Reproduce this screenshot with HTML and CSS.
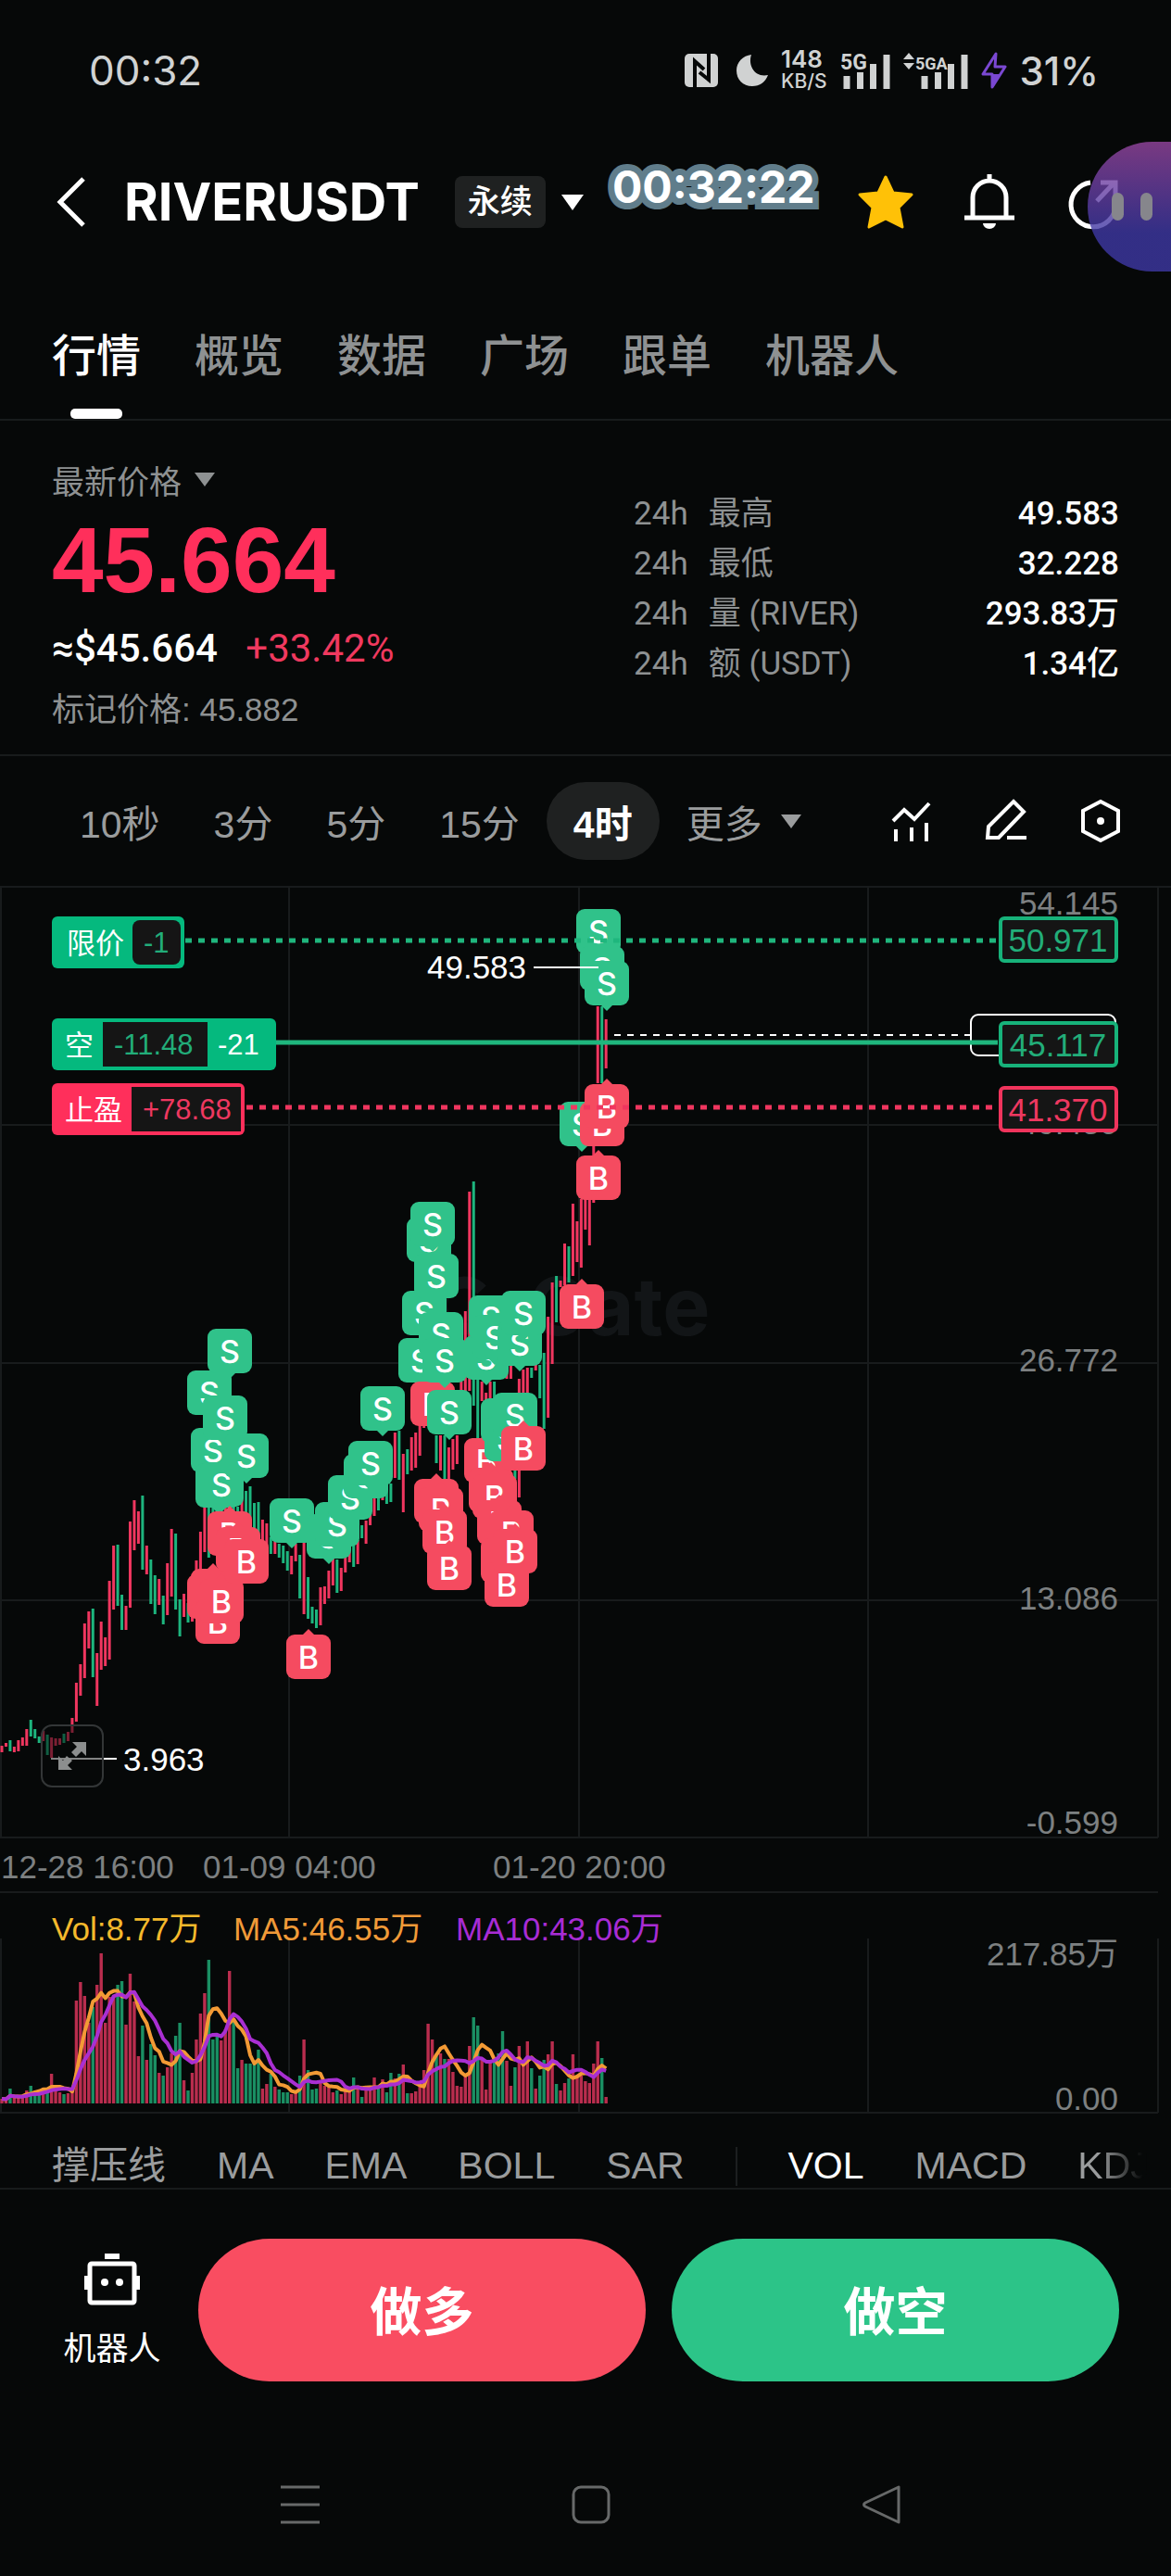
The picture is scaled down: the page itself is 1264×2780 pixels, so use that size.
FILE: index.html
```html
<!DOCTYPE html>
<html lang="zh-CN">
<head>
    <meta charset="UTF-8">
    <meta name="viewport" content="width=device-width, initial-scale=1.0">
    <title>RIVERUSDT 永续</title>
    <link rel="stylesheet" href="styles.css">
</head>
<body>
    <div class="status-bar">
        <span class="status-time">00:32</span>
        <div class="status-icons">
            <svg class="icon-nfc" viewBox="0 0 36 36" width="36" height="36">
                <rect width="36" height="36" rx="5" fill="#d0d2d2"/>
                <path d="M11 36V8L21 17M26 0V28L16 20" fill="none" stroke="#060808" stroke-width="4"/>
            </svg>
            <svg class="icon-moon" viewBox="0 0 34 34" width="34" height="34">
                <path d="M16 0C12 12 20 25 34 22C31 30 25 34 17 34C7 34 0 27 0 17C0 8 7 1 16 0Z" fill="#d0d2d2"/>
            </svg>
            <div class="net-speed"><b>148</b><span>KB/S</span></div>
            <svg class="icon-signal" viewBox="0 0 54 42" width="54" height="42">
                <text x="0" y="20" class="signal-text">5G</text>
                <path d="M7 41V27M21.500 41V23M35.500 41V14M50 41V4" class="signal-bars"/>
            </svg>
            <svg class="icon-signal-5ga" viewBox="0 0 70 42" width="70" height="42">
                <path d="M6 2L12 9H0ZM6 20L0 13H12Z" fill="#d0d2d2"/>
                <text x="13" y="20" class="signal-text small">5GA</text>
                <path d="M23 41V27M37.500 41V23M51.500 41V14M66 41V4" class="signal-bars"/>
            </svg>
            <svg class="icon-bolt" viewBox="0 0 28 40" width="28" height="40">
                <path d="M16 2L2 24H12V38L26 16H15Z" fill="none" stroke="#7a48d2" stroke-width="3" stroke-linejoin="round"/>
                <path d="M11 24H20L12 39Z" fill="#7a48d2"/>
            </svg>
            <span class="battery">31%</span>
        </div>
    </div>

    <header class="header">
        <button class="icon-btn back" aria-label="返回">
            <svg viewBox="0 0 34 54" width="34" height="54"><path d="M30 2L5 27L30 52" fill="none" stroke="#fff" stroke-width="5"/></svg>
        </button>
        <h1>RIVERUSDT</h1>
        <button class="contract">
            <span class="contract-type">永续</span>
            <svg viewBox="0 0 24 17" width="24" height="17"><path d="M0 0H24L12 17Z" fill="#fff"/></svg>
        </button>
        <div class="header-actions">
            <button class="icon-btn" aria-label="收藏">
                <svg viewBox="0 0 64 64" width="64" height="64"><path d="M32 5L40 22L60 24L46 38L50 59L32 50L14 59L18 38L4 24L24 22Z" fill="#ffc107" stroke="#ffc107" stroke-width="3" stroke-linejoin="round"/></svg>
            </button>
            <button class="icon-btn" aria-label="提醒">
                <svg viewBox="0 0 64 64" width="64" height="64">
                    <path d="M14 48V27A18 18 0 0 1 50 27V48M5 49H59M32 2V9" fill="none" stroke="#fff" stroke-width="5"/>
                    <path d="M25 55H39A7 6 0 0 1 25 55Z" fill="#fff"/>
                </svg>
            </button>
            <button class="icon-btn" aria-label="分享">
                <svg viewBox="0 0 64 64" width="64" height="64">
                    <path d="M29 11A24 24 0 1 0 56 36M36 31L54 12M40 11H56V27" fill="none" stroke="#fff" stroke-width="5"/>
                </svg>
            </button>
        </div>
        <div class="float-clock">00:32:22</div>
        <div class="float-ball"><i></i><i></i></div>
    </header>

    <nav class="tabs">
        <a href="#" class="active">行情</a>
        <a href="#">概览</a>
        <a href="#">数据</a>
        <a href="#">广场</a>
        <a href="#">跟单</a>
        <a href="#">机器人</a>
    </nav>

    <section class="summary">
        <div class="price-box">
            <button class="price-label">最新价格
                <svg viewBox="0 0 22 15" width="22" height="15"><path d="M0 0H22L11 15Z" fill="#8e9192"/></svg>
            </button>
            <div class="price">45.664</div>
            <div class="price-usd">≈$45.664 <span class="change">+33.42%</span></div>
            <div class="mark-price">标记价格: 45.882</div>
        </div>
        <table class="stats">
            <tr><th><span>24h</span>最高</th><td>49.583</td></tr>
            <tr><th><span>24h</span>最低</th><td>32.228</td></tr>
            <tr><th><span>24h</span>量 (RIVER)</th><td>293.83万</td></tr>
            <tr><th><span>24h</span>额 (USDT)</th><td>1.34亿</td></tr>
        </table>
    </section>

    <div class="toolbar">
        <button>10秒</button>
        <button>3分</button>
        <button>5分</button>
        <button>15分</button>
        <button class="active">4时</button>
        <button class="more">更多
            <svg viewBox="0 0 22 15" width="22" height="15"><path d="M0 0H22L11 15Z" fill="#9a9c9d"/></svg>
        </button>
        <div class="tools">
            <button class="icon-btn" aria-label="指标">
                <svg viewBox="0 0 48 48" width="48" height="48"><path d="M4 24L16 12L27 22L43 5M7 46V33M24 46V31M40 46V26" fill="none" stroke="#fff" stroke-width="4"/></svg>
            </button>
            <button class="icon-btn" aria-label="画线">
                <svg viewBox="0 0 48 48" width="48" height="48"><path d="M32 3L43 14L16 42H4L5 30ZM25 42H46" fill="none" stroke="#fff" stroke-width="4"/></svg>
            </button>
            <button class="icon-btn" aria-label="设置">
                <svg viewBox="0 0 48 48" width="48" height="48">
                    <path d="M24 3L43 13V35L24 45L5 35V13Z" fill="none" stroke="#fff" stroke-width="4"/>
                    <circle cx="24" cy="24" r="4" fill="#fff"/>
                </svg>
            </button>
        </div>
    </div>

    <div class="chart-wrap">
        <svg id="chart" class="chart" viewBox="0 0 1264 1325">
            <g id="grid" class="grid"></g>
            <g class="watermark">
                <path d="M520 434A25 25 0 1 0 524 462H504" fill="none" stroke="#121517" stroke-width="13"/>
                <text x="570" y="483">Gate</text>
            </g>
            <g id="candles"></g>
            <g id="markers"></g>
            <g id="volume"></g>

            <g class="axis">
                <text x="1207" y="29">54.145</text>
                <text x="1207" y="266">40.459</text>
                <text x="1207" y="522">26.772</text>
                <text x="1207" y="779">13.086</text>
                <text x="1207" y="1021">-0.599</text>
                <text x="1207" y="1163">217.85万</text>
                <text x="1207" y="1319">0.00</text>
            </g>
            <g class="dates">
                <text x="1" y="1069">12-28 16:00</text>
                <text x="219" y="1069">01-09 04:00</text>
                <text x="532" y="1069">01-20 20:00</text>
            </g>

            <!-- high / low labels -->
            <path d="M576 86H646M55 940H126" stroke="#fff" stroke-width="2"/>
            <text x="461" y="98" class="hl">49.583</text>
            <text x="133" y="953" class="hl">3.963</text>

            <!-- last price -->
            <path d="M663 159H1048" stroke="#fff" stroke-width="2" stroke-dasharray="7 7"/>
            <rect x="1048" y="137" width="156" height="44" rx="8" fill="#060808" stroke="#fff" stroke-width="2"/>

            <!-- order and position lines -->
            <path d="M200 57H1077" stroke="#1fb67d" stroke-width="5" stroke-dasharray="7 7"/>
            <path d="M298 167H1077" stroke="#1fb67d" stroke-width="5"/>
            <path d="M266 237H1077" stroke="#f0365f" stroke-width="5" stroke-dasharray="7 7"/>

            <g class="tag long">
                <rect x="56" y="31" width="143" height="56" rx="6" class="fill"/>
                <rect x="143" y="35" width="52" height="48" rx="8" class="inner"/>
                <text x="72" y="71" class="name">限价</text>
                <text x="155" y="70" class="num">-1</text>
                <rect x="1080" y="33" width="125" height="46" rx="4" class="box"/>
                <text x="1142" y="69" class="level">50.971</text>
            </g>
            <g class="tag long">
                <rect x="56" y="141" width="242" height="56" rx="6" class="fill"/>
                <rect x="111" y="145" width="113" height="48" class="inner"/>
                <text x="70" y="181" class="name">空</text>
                <text x="123" y="180" class="num">-11.48</text>
                <text x="235" y="180" class="name">-21</text>
                <rect x="1080" y="146" width="125" height="46" rx="4" class="box"/>
                <text x="1142" y="182" class="level">45.117</text>
            </g>
            <g class="tag short">
                <rect x="56" y="211" width="208" height="56" rx="6" class="fill"/>
                <rect x="142" y="215" width="118" height="48" class="inner"/>
                <text x="70" y="251" class="name">止盈</text>
                <text x="154" y="250" class="num">+78.68</text>
                <rect x="1080" y="216" width="125" height="46" rx="4" class="box"/>
                <text x="1142" y="252" class="level">41.370</text>
            </g>

            <g class="legend">
                <text x="56" y="1136" fill="#f5b92c">Vol:8.77万</text>
                <text x="252" y="1136" fill="#f09a38">MA5:46.55万</text>
                <text x="492" y="1136" fill="#a82cd4">MA10:43.06万</text>
            </g>
        </svg>
        <button class="expand" aria-label="全屏">
            <svg viewBox="0 0 36 36" width="36" height="36">
                <path d="M18 3H33V18L28 13L22 19L17 14L23 8ZM3 18L8 23L12 18L18 23L13 28L18 33H3Z" fill="#8c8e8e"/>
            </svg>
        </button>
    </div>

    <div class="indicators">
        <button>撑压线</button>
        <button>MA</button>
        <button>EMA</button>
        <button>BOLL</button>
        <button>SAR</button>
        <span class="divider"></span>
        <button class="active">VOL</button>
        <button>MACD</button>
        <button>KDJ</button>
    </div>

    <div class="trade-bar">
        <button class="robot">
            <svg viewBox="0 0 60 56" width="60" height="56">
                <path d="M22 0H38V6H22Z" fill="#fff"/>
                <rect x="6" y="11" width="48" height="42" rx="2" fill="none" stroke="#fff" stroke-width="5"/>
                <path d="M2 24V39M58 24V39" stroke="#fff" stroke-width="4"/>
                <circle cx="22" cy="31" r="4" fill="#fff"/>
                <circle cx="38" cy="31" r="4" fill="#fff"/>
            </svg>
            <span>机器人</span>
        </button>
        <button class="trade buy">做多</button>
        <button class="trade sell">做空</button>
    </div>

    <div class="system-nav">
        <button class="icon-btn" aria-label="菜单">
            <svg viewBox="0 0 42 42" width="42" height="42"><path d="M0 2H42M0 21H42M0 40H42" stroke="#676969" stroke-width="3"/></svg>
        </button>
        <button class="icon-btn" aria-label="主页">
            <svg viewBox="0 0 42 42" width="42" height="42"><rect x="2" y="2" width="38" height="38" rx="8" fill="none" stroke="#676969" stroke-width="3"/></svg>
        </button>
        <button class="icon-btn" aria-label="后退">
            <svg viewBox="0 0 42 42" width="42" height="42"><path d="M39 2V40L3 23Q0 21 3 19Z" fill="none" stroke="#676969" stroke-width="3" stroke-linejoin="round"/></svg>
        </button>
    </div>

    <script src="chart.js"></script>
</body>
</html>
```
FILE: styles.css
```css
* {
    box-sizing: border-box;
}
body {
    margin: 0;
    background: #060808;
    color: #fff;
    font-family: "Liberation Sans", "Noto Sans CJK SC", sans-serif;
    font-size: 35px;
}
button {
    margin: 0;
    padding: 0;
    border: 0;
    background: none;
    color: inherit;
    font: inherit;
    white-space: nowrap;
}
svg {
    display: block;
    flex: none;
}
.icon-btn {
    display: flex;
}

/* status bar */
.status-bar {
    display: flex;
    align-items: center;
    justify-content: space-between;
    height: 152px;
    padding: 0 78px 0 96px;
    color: #d0d2d2;
    font-family: Inter, sans-serif;
    font-size: 44px;
}
.status-icons {
    display: flex;
    align-items: center;
    gap: 14px;
}
.icon-nfc {
    margin-right: 6px;
}
.net-speed {
    display: flex;
    flex-direction: column;
    font-size: 21px;
    font-weight: 500;
    line-height: 24px;
}
.net-speed b {
    font-size: 26px;
    font-weight: 600;
}
.signal-text {
    font: 700 23px Roboto, sans-serif;
    fill: #d0d2d2;
}
.signal-text.small {
    font-size: 18px;
}
.signal-bars {
    stroke: #d0d2d2;
    stroke-width: 7;
}
.battery {
    font-size: 42px;
    font-weight: 500;
}

/* header */
.header {
    position: relative;
    display: flex;
    align-items: center;
    height: 132px;
    padding: 0 52px 0 60px;
}
.header h1 {
    margin: 0 0 0 40px;
    font-family: Inter, sans-serif;
    font-size: 56px;
    font-weight: 700;
}
.contract {
    display: flex;
    align-items: center;
    gap: 17px;
    margin-left: 38px;
}
.contract-type {
    padding: 0 14px;
    border-radius: 8px;
    background: #1f2121;
    font-size: 35px;
    font-weight: 500;
    line-height: 56px;
}
.header-actions {
    display: flex;
    gap: 48px;
    margin-left: auto;
}
.float-clock {
    position: absolute;
    top: 20px;
    left: 661px;
    font-family: Inter, sans-serif;
    font-size: 48px;
    font-weight: 700;
    line-height: 60px;
    -webkit-text-stroke: 14px #607d8b;
    paint-order: stroke fill;
}
.float-ball {
    position: absolute;
    top: 1px;
    right: 0;
    display: flex;
    align-items: center;
    gap: 18px;
    width: 90px;
    height: 140px;
    padding-left: 26px;
    border-radius: 70px 0 0 70px;
    background: linear-gradient(rgba(150, 70, 160, 0.8), rgba(62, 56, 165, 0.8) 70%);
}
.float-ball i {
    width: 13px;
    height: 30px;
    border-radius: 7px;
    background: #86868c;
}

/* tabs */
.tabs {
    display: flex;
    gap: 58px;
    padding: 0 56px;
    border-bottom: 2px solid #181b1c;
}
.tabs a {
    position: relative;
    padding: 66px 0 32px;
    color: #8e9192;
    font-size: 48px;
    font-weight: 500;
    line-height: 70px;
    text-decoration: none;
}
.tabs a.active {
    color: #fff;
}
.tabs a.active::after {
    content: "";
    position: absolute;
    bottom: 0;
    left: 20px;
    right: 20px;
    height: 11px;
    border-radius: 5px;
    background: #fff;
}

/* price summary */
.summary {
    display: flex;
    justify-content: space-between;
    padding: 40px 56px 18px;
    border-bottom: 2px solid #181b1c;
}
.price-label {
    display: flex;
    align-items: center;
    gap: 14px;
    height: 50px;
    padding-bottom: 4px;
    color: #8e9192;
}
.price {
    color: #ff2f5b;
    font-size: 100px;
    font-weight: 700;
    line-height: 120px;
}
.price-usd {
    font-family: Roboto, "Liberation Sans", sans-serif;
    font-size: 42px;
    font-weight: 500;
    line-height: 72px;
}
.change {
    margin-left: 20px;
    color: #f0395f;
    font-weight: 400;
}
.mark-price {
    color: #8e9192;
    line-height: 60px;
}
.stats {
    width: 46%;
    height: 216px;
    margin-top: 34px;
    padding-left: 6px;
    border-spacing: 0;
}
.stats th,
.stats td {
    height: 54px;
    padding: 0;
    font-family: Roboto, "Noto Sans CJK SC", sans-serif;
    line-height: 54px;
}
.stats th {
    color: #8e9192;
    font-weight: 400;
    text-align: left;
}
.stats th span {
    margin-right: 22px;
}
.stats td {
    font-weight: 500;
    text-align: right;
}

/* interval toolbar */
.toolbar {
    display: flex;
    align-items: center;
    height: 142px;
    padding: 0 52px 0 57px;
    border-bottom: 2px solid #181b1c;
    color: #9a9c9d;
    font-size: 41px;
}
.toolbar > button {
    height: 84px;
    padding: 0 29px;
    border-radius: 42px;
}
.toolbar .active {
    background: #1f2121;
    color: #fff;
    font-weight: 700;
}
.toolbar .more {
    display: flex;
    align-items: center;
    gap: 20px;
}
.tools {
    display: flex;
    gap: 54px;
    margin-left: auto;
}

/* chart */
.chart-wrap {
    position: relative;
}
.chart {
    width: 100%;
}
.chart text {
    font-size: 35px;
}
.grid path {
    fill: none;
    stroke: #181b1c;
    stroke-width: 2;
}
.chart .watermark text {
    fill: #121517;
    font-family: Inter, sans-serif;
    font-size: 86px;
    font-weight: 700;
}
.up {
    fill: #f0365f;
}
.down {
    fill: #1db57e;
}
.vol-up {
    fill: #b92d4e;
}
.vol-down {
    fill: #1a8f63;
}
.ma {
    fill: none;
    stroke-width: 4;
    stroke-linejoin: round;
}
.ma5 {
    stroke: #f39a35;
}
.ma10 {
    stroke: #a92fd2;
}
.mark-s {
    fill: #30c28a;
}
.mark-b {
    fill: #f54b60;
}
.chart .mark-text {
    fill: #fff;
    font-family: Inter, sans-serif;
    font-size: 34px;
    font-weight: 500;
    text-anchor: middle;
}
.axis text {
    fill: #7d8081;
    text-anchor: end;
}
.dates text {
    fill: #7d8081;
}
.chart .hl {
    fill: #fff;
}
.tag .inner {
    fill: #151515;
}
.tag .box {
    fill: #151515;
    stroke-width: 4;
}
.chart .tag .name {
    fill: #fff;
    font-size: 31px;
}
.chart .tag .num {
    font-size: 31px;
}
.tag .level {
    text-anchor: middle;
}
.long .fill {
    fill: #05b97e;
}
.long .num,
.long .level {
    fill: #22ad79;
}
.long .box {
    stroke: #17b27a;
}
.short .fill {
    fill: #ff2f5b;
}
.short .num,
.short .level {
    fill: #ee3860;
}
.short .box {
    stroke: #f0345c;
}
.expand {
    position: absolute;
    top: 903px;
    left: 44px;
    padding: 14px;
    border: 2px solid #333637;
    border-radius: 12px;
    background: rgba(6, 8, 8, 0.5);
}

/* indicator list */
.indicators {
    display: flex;
    gap: 55px;
    overflow: hidden;
    height: 80px;
    padding: 30px 0 0 56px;
    border-bottom: 2px solid #181b1c;
    color: #9a9c9d;
    font-size: 41px;
    line-height: 48px;
}
.indicators button {
    height: 48px;
}
.indicators .active {
    color: #fff;
}
.indicators .divider {
    flex: none;
    width: 2px;
    height: 42px;
    margin-top: 4px;
    background: #1c1f20;
}
.indicators button:last-child {
    background: linear-gradient(90deg, #9a9c9d 30%, #060808 90%);
    -webkit-background-clip: text;
    background-clip: text;
    color: transparent;
}

/* trade buttons */
.trade-bar {
    display: flex;
    align-items: center;
    gap: 28px;
    padding: 53px 56px 0;
}
.robot {
    display: flex;
    flex-direction: column;
    align-items: center;
    gap: 22px;
    width: 130px;
    padding-top: 6px;
    font-size: 35px;
    line-height: 50px;
}
.trade {
    flex: 1;
    height: 154px;
    padding-bottom: 5px;
    border-radius: 77px;
    font-size: 56px;
    font-weight: 700;
}
.buy {
    background: #f94d61;
}
.sell {
    background: #2cc488;
}

/* android navigation */
.system-nav {
    display: flex;
    justify-content: space-between;
    padding: 112px 23% 40px 24%;
}
```
FILE: chart.js
```js
const NS = 'http://www.w3.org/2000/svg';
const STEP = 4.467;
const START = 2;
const VOL_BASE = 1312;

// [direction, high, low] per 4h candle
const candles = [
    'u926-933 u923-927 d920-932 u927-933 u920-932 u917-926 u908-926 d898-916 d908-918 d916-923',
    'u910-921 d914-936 u917-939 u918-926 u918-925 d913-923 u911-921 u896-912 u858-900 u838-872',
    'u794-853 u781-821 d778-852 u826-883 u792-844 u809-840 u748-833 u710-779 d709-775 d763-801',
    'u775-801 u684-777 u661-715 u673-708 d656-736 u710-741 d725-773 d742-784 u746-774 d764-795',
    'u729-785 u692-765 d697-779 d768-808 u762-787 d772-793 u765-792 u726-779 u695-743 u668-717',
    'd668-723 d668-708 d668-694 u668-694 u668-694 u668-694 d668-694 d668-694 u654-679 d651-679',
    'd646-690 d664-695 d663-708 u682-708 u686-715 d701-719 u704-719 d708-723 d710-729 d716-737',
    'u721-741 u708-727 d720-767 u706-784 d744-789 d776-794 d779-799 u755-796 u754-773 u737-767',
    'u724-753 d725-761 u734-759 u722-739 u715-728 d708-733 u704-730 d688-702 u683-708 u672-688',
    'u658-678 d651-672 u647-661 d640-665 d643-663 u588-637 d586-639 u611-674 d606-633 u593-629',
    'u588-626 u581-613 u551-583 u543-579 u536-586 d591-621 u591-629 d591-640 u604-640 u595-628',
    'u591-622 u533-542 u457-543 u328-543 d317-559 d531-597 u533-554 u545-554 u533-572 d533-554',
    'd500-530 d500-530 u500-530 u500-530 d629-638 u530-658 u520-572 u518-550 d518-529 u515-521',
    'd515-551 d502-584 u463-572 u426-514 d419-469 u424-431 u384-429 d387-426 u341-419 u360-404',
    'u336-410 u336-369 u336-386 u278-340 u128-211 d128-211 u142-195'
].join(' ').split(' ').map(function(item) {
    const range = item.slice(1).split('-').map(Number);
    return { dir: item[0] === 'u' ? 'up' : 'down', high: range[0], low: range[1] };
});

const volumes = [
    5, 4, 16, 6, 6, 7, 14, 19, 14, 12, 17, 15, 32, 14, 12, 10, 11, 17, 111, 131,
    116, 87, 104, 128, 162, 87, 115, 115, 128, 132, 85, 140, 110, 51, 84, 47, 64, 52, 33, 30,
    39, 54, 73, 87, 25, 14, 33, 69, 97, 119, 155, 69, 74, 68, 80, 143, 90, 38, 47, 43,
    43, 44, 58, 16, 21, 32, 18, 15, 12, 12, 10, 12, 30, 69, 36, 15, 16, 24, 19, 20,
    12, 14, 10, 15, 17, 28, 17, 7, 17, 18, 28, 19, 26, 12, 33, 27, 32, 42, 11, 11,
    13, 20, 36, 86, 69, 51, 54, 48, 48, 34, 19, 18, 31, 62, 93, 84, 47, 15, 47, 45,
    54, 78, 46, 19, 39, 62, 42, 67, 38, 16, 30, 47, 53, 67, 21, 14, 22, 27, 53, 29,
    30, 24, 22, 43, 67, 49, 7
];

// own trades, ordered by time: [side, x, y]
const trades = [
    ['S', 226, 521], ['B', 226, 741], ['S', 230, 583], ['B', 230, 735], ['S', 235, 621], ['B', 235, 768],
    ['S', 239, 620], ['B', 239, 746], ['S', 243, 548], ['S', 248, 476], ['B', 248, 673], ['B', 257, 690],
    ['S', 266, 589], ['B', 266, 703], ['S', 315, 659], ['B', 333, 806], ['S', 355, 676], ['S', 364, 663],
    ['S', 378, 634], ['S', 395, 611], ['S', 400, 597], ['S', 413, 538], ['S', 454, 486], ['S', 458, 435],
    ['S', 463, 356], ['S', 467, 339], ['B', 467, 533], ['S', 471, 395], ['B', 471, 638], ['S', 476, 458],
    ['B', 476, 647], ['S', 480, 486], ['B', 480, 671], ['S', 485, 542], ['B', 485, 710], ['S', 525, 483],
    ['B', 525, 594], ['S', 530, 440], ['B', 530, 626], ['S', 534, 461], ['B', 534, 633], ['B', 539, 661],
    ['S', 543, 551], ['B', 543, 702], ['S', 547, 571], ['B', 547, 728], ['B', 552, 672], ['S', 556, 545],
    ['B', 556, 692], ['S', 561, 468], ['S', 565, 435], ['B', 565, 581], ['S', 628, 231], ['B', 628, 428],
    ['S', 646, 23], ['B', 646, 289], ['S', 650, 63], ['B', 650, 231], ['S', 655, 79], ['B', 655, 212]
];

function add(parent, tag, attrs, text) {
    const el = document.createElementNS(NS, tag);
    for (const key in attrs) {
        el.setAttribute(key, attrs[key]);
    }
    if (text) {
        el.textContent = text;
    }
    parent.appendChild(el);
}

function drawGrid() {
    const grid = document.getElementById('grid');
    [1, 312, 625, 937, 1250].forEach(function(x) {
        add(grid, 'path', { d: `M${x} 0V1025M${x} 1134V1322` });
    });
    [256, 513, 769, 1025, 1084, 1322].forEach(function(y) {
        add(grid, 'path', { d: `M0 ${y}H1250` });
    });
}

function drawCandles() {
    const group = document.getElementById('candles');
    candles.forEach(function(c, i) {
        add(group, 'rect', { class: c.dir, x: START + i * STEP - 1.5, y: c.high, width: 3, height: c.low - c.high });
    });
}

function average(index, count) {
    const part = volumes.slice(Math.max(0, index - count + 1), index + 1);
    return part.reduce((a, b) => a + b, 0) / part.length;
}

function drawVolume() {
    const group = document.getElementById('volume');
    volumes.forEach(function(v, i) {
        add(group, 'rect', { class: 'vol-' + candles[i].dir, x: START + i * STEP - 1.7, y: VOL_BASE - v, width: 3.4, height: v });
    });
    [5, 10].forEach(function(count) {
        const points = volumes.map((v, i) => `${START + i * STEP},${VOL_BASE - average(i, count)}`);
        add(group, 'polyline', { class: 'ma ma' + count, points: points.join(' ') });
    });
}

function drawTrades() {
    const group = document.getElementById('markers');
    trades.forEach(function([side, x, y]) {
        const cls = side === 'S' ? 'mark-s' : 'mark-b';
        const arrow = side === 'S' ? `M${x - 7} ${y + 47}h14l-7 7z` : `M${x - 7} ${y + 1}h14l-7 -7z`;
        add(group, 'path', { class: cls, d: arrow });
        add(group, 'rect', { class: cls, x: x - 24, y: y, width: 48, height: 48, rx: 9 });
        add(group, 'text', { class: 'mark-text', x: x, y: y + 37 }, side);
    });
}

drawGrid();
drawCandles();
drawTrades();
drawVolume();
```
